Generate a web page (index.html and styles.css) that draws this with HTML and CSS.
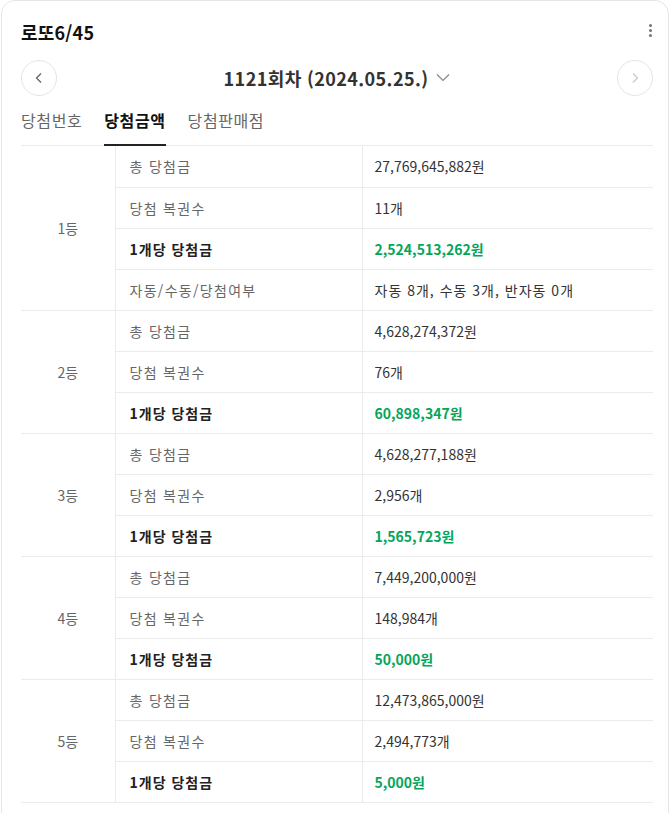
FILE: index.html
```html
<!DOCTYPE html>
<html lang="ko">
<head>
    <meta charset="UTF-8">
    <title>로또6/45</title>
    <link rel="stylesheet" href="styles.css">
</head>
<body>
    <div class="card">
        <div class="head">
            <h2 class="title">로또6/45</h2>
            <span class="more">
                <i></i><i></i><i></i>
            </span>
        </div>

        <div class="round-nav">
            <button class="arrow">
                <svg width="12" height="12" viewBox="0 0 12 12"><path d="M8 1.5L3.5 6L8 10.5" fill="none" stroke="#666" stroke-width="1.3"/></svg>
            </button>
            <div class="round">
                1121회차 (2024.05.25.)
                <svg class="caret" width="14" height="9" viewBox="0 0 14 9"><path d="M1 1.5L7 7.5L13 1.5" fill="none" stroke="#888" stroke-width="1.2"/></svg>
            </div>
            <button class="arrow off">
                <svg width="12" height="12" viewBox="0 0 12 12"><path d="M4 1.5L8.5 6L4 10.5" fill="none" stroke="#ccc" stroke-width="1.3"/></svg>
            </button>
        </div>

        <nav class="tabs">
            <a href="#">당첨번호</a>
            <a href="#" class="on">당첨금액</a>
            <a href="#">당첨판매점</a>
        </nav>

        <table class="prize">
            <tbody>
                <tr>
                    <td class="rank" rowspan="4">1등</td>
                    <td class="label">총 당첨금</td>
                    <td class="val">27,769,645,882원</td>
                </tr>
                <tr><td class="label">당첨 복권수</td><td class="val">11개</td></tr>
                <tr><td class="label strong">1개당 당첨금</td><td class="val money">2,524,513,262원</td></tr>
                <tr><td class="label">자동/수동/당첨여부</td><td class="val"><span class="ko">자동 8개, 수동 3개, 반자동 0개</span></td></tr>

                <tr>
                    <td class="rank" rowspan="3">2등</td>
                    <td class="label">총 당첨금</td>
                    <td class="val">4,628,274,372원</td>
                </tr>
                <tr><td class="label">당첨 복권수</td><td class="val">76개</td></tr>
                <tr><td class="label strong">1개당 당첨금</td><td class="val money">60,898,347원</td></tr>

                <tr>
                    <td class="rank" rowspan="3">3등</td>
                    <td class="label">총 당첨금</td>
                    <td class="val">4,628,277,188원</td>
                </tr>
                <tr><td class="label">당첨 복권수</td><td class="val">2,956개</td></tr>
                <tr><td class="label strong">1개당 당첨금</td><td class="val money">1,565,723원</td></tr>

                <tr>
                    <td class="rank" rowspan="3">4등</td>
                    <td class="label">총 당첨금</td>
                    <td class="val">7,449,200,000원</td>
                </tr>
                <tr><td class="label">당첨 복권수</td><td class="val">148,984개</td></tr>
                <tr><td class="label strong">1개당 당첨금</td><td class="val money">50,000원</td></tr>

                <tr>
                    <td class="rank" rowspan="3">5등</td>
                    <td class="label">총 당첨금</td>
                    <td class="val">12,473,865,000원</td>
                </tr>
                <tr><td class="label">당첨 복권수</td><td class="val">2,494,773개</td></tr>
                <tr><td class="label strong">1개당 당첨금</td><td class="val money">5,000원</td></tr>
            </tbody>
        </table>
    </div>
</body>
</html>
```

FILE: styles.css
```css
* {
    box-sizing: border-box;
}

body {
    margin: 0;
    background: #fff;
    font-family: "Noto Sans CJK KR", "Noto Sans", sans-serif;
    color: #333;
}

.card {
    margin-left: 1px;
    width: 668px;
    height: 830px;
    border: 1px solid #e6e6e6;
    border-radius: 14px;
    padding: 0 15px 0 19px;
    overflow: hidden;
}

.head {
    display: flex;
    justify-content: space-between;
    align-items: center;
    height: 60px;
    padding-top: 1px;
}

.title {
    margin: 0;
    font-size: 18px;
    font-weight: 700;
    color: #111;
    letter-spacing: 0.2px;
}

.more {
    display: flex;
    flex-direction: column;
    gap: 2px;
    margin-right: 1px;
    margin-top: -3px;
}

.more i {
    display: block;
    width: 3px;
    height: 3px;
    border-radius: 50%;
    background: #777;
}

.round-nav {
    display: flex;
    justify-content: space-between;
    align-items: center;
    height: 34px;
}

.arrow {
    width: 36px;
    height: 36px;
    border: 1px solid #e4e4e4;
    border-radius: 50%;
    background: #fff;
    display: grid;
    place-items: center;
    padding: 0;
}

.round {
    display: flex;
    align-items: center;
    gap: 8px;
    font-size: 18px;
    font-weight: 700;
    color: #333;
    letter-spacing: 0.4px;
}

.caret {
    margin-top: -2px;
}

.tabs {
    display: flex;
    gap: 22px;
    margin-top: 10px;
    border-bottom: 1px solid #ebebeb;
}

.tabs a {
    text-decoration: none;
    color: #666;
    font-size: 16px;
    line-height: 20px;
    letter-spacing: 0.6px;
    padding: 5px 0 14px;
    border-bottom: 2px solid transparent;
    margin-bottom: -1px;
}

.tabs a.on {
    color: #111;
    font-weight: 700;
    border-bottom-color: #222;
}

.prize {
    width: 100%;
    border-collapse: collapse;
    font-size: 14px;
}

.prize td {
    height: 41px;
    padding: 0;
    border-bottom: 1px solid #ebebeb;
    line-height: 20px;
}

.prize .rank {
    width: 94px;
    text-align: center;
    color: #666;
    border-right: 1px solid #ebebeb;
}

.prize .label {
    width: 247px;
    padding-left: 14px;
    color: #666;
    letter-spacing: 1.3px;
    border-right: 1px solid #ebebeb;
}

.prize .label.strong {
    color: #222;
    font-weight: 700;
    letter-spacing: 1px;
}

.prize .val {
    padding-left: 12px;
    color: #333;
}

.prize .ko {
    letter-spacing: 1px;
}

.prize .money {
    color: #05a55a;
    font-weight: 700;
}
```
